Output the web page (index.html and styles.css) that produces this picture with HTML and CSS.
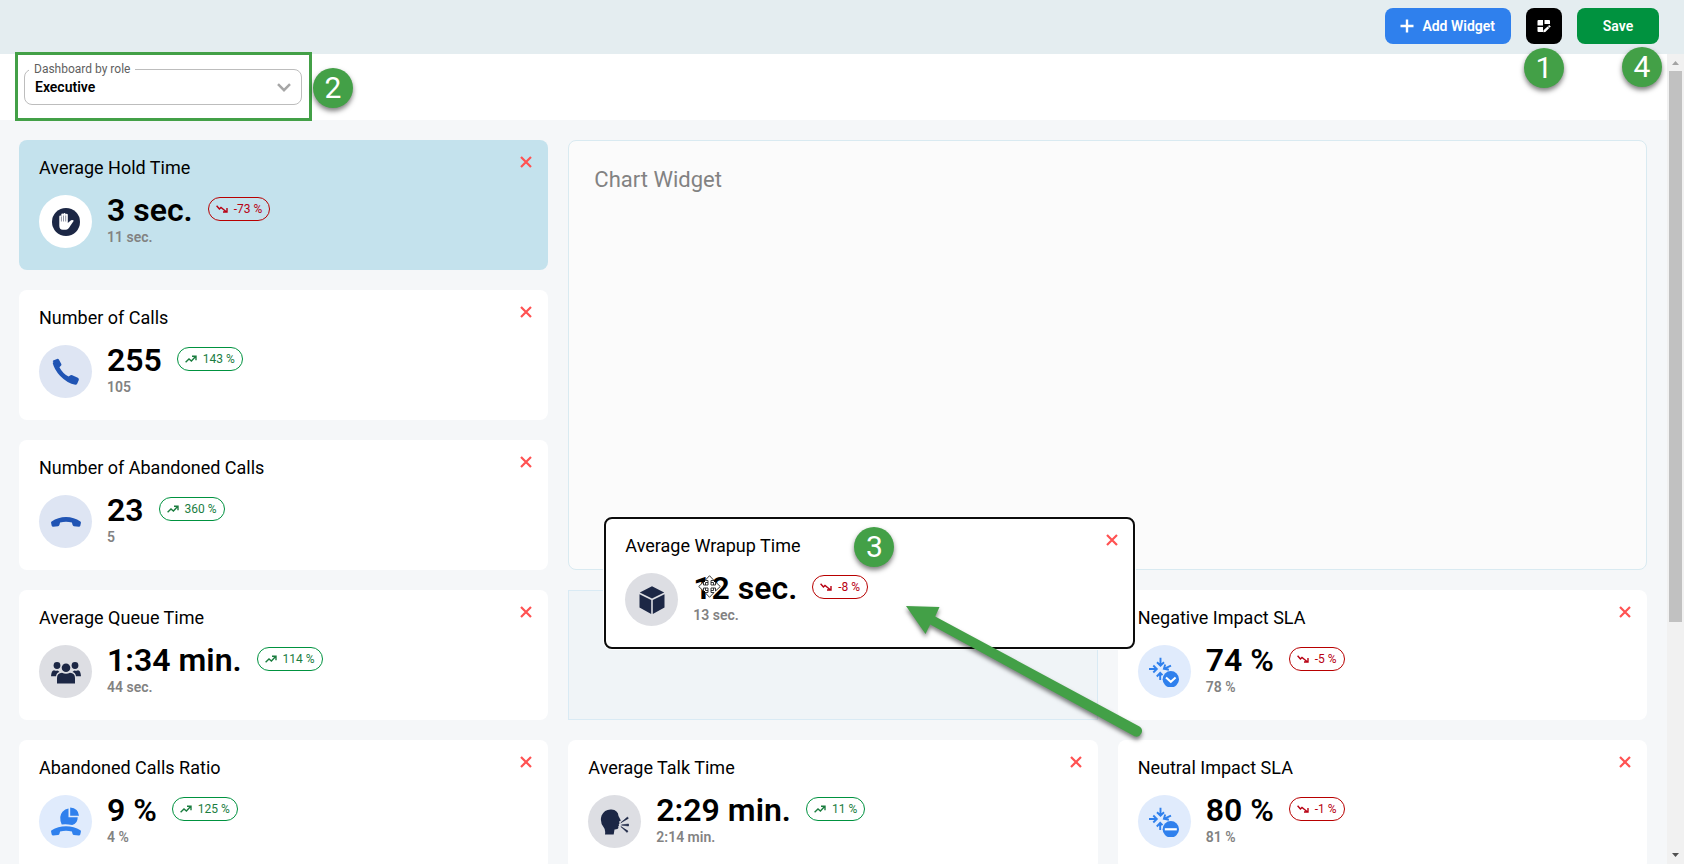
FILE: index.html
```html
<!DOCTYPE html>
<html lang="en">
<head>
  <meta charset="UTF-8">
  <meta name="viewport" content="width=device-width, initial-scale=1.0">
  <title>Dashboard</title>
  <link rel="stylesheet" href="styles.css">
</head>
<body>
  <!-- icon sprites -->
  <svg class="sprites" aria-hidden="true">
    <symbol id="i-close" viewBox="0 0 12 12"><path d="M1 1l10 10M11 1L1 11" fill="none" stroke="#ff5252" stroke-width="2.200"/></symbol>
    <symbol id="i-up" viewBox="0 0 12 8"><path d="M0.6 7.2L4 4l2.4 2L10.6 1.6M7 1.2h4v4" fill="none" stroke="currentColor" stroke-width="1.4"/></symbol>
    <symbol id="i-down" viewBox="0 0 12 8"><path d="M0.6 0.8L3.4 4l1.6-1.6L10.6 7M11 3v4H7" fill="none" stroke="currentColor" stroke-width="1.4"/></symbol>
    <symbol id="i-hand" viewBox="0 0 30 30">
      <circle cx="15" cy="15" r="14" fill="#1c2745"/>
      <path d="M8.3 9.5a1 1 0 0 1 2 0V7.600a1 1 0 0 1 2.100 0V7a1 1 0 0 1 2.200 0v.8a1 1 0 0 1 2.200 0V16l3.200-2.700q1.600-1 2.800.4l-3.600 5.400q-1.800 3.700-4.400 3.700h-3q-3.500 0-3.500-4z" fill="#fff"/>
      <path d="M10.400 9.500v5M12.500 8.500v6M14.700 8.500v6" stroke="#1c2745" stroke-width=".5"/>
    </symbol>
    <symbol id="i-phone" viewBox="0 0 30 30"><path d="M2.500 5Q1 4.300 2.200 3.400L6 1.900q1.200-.5 1.900.7l2.400 4.300q.5 1-.4 1.800L8.400 10.200q3.400 6.400 9.200 9.400l1.900-1.300q.8-.6 1.800-.1l5.500 2.500q1.500.8 1 2.200l-1.500 3.600q-.6 1.300-2 1.200Q16.500 26.500 9 18.700 3.300 12.600 1.700 6z" fill="#2054b4"/></symbol>
    <symbol id="i-hangup" viewBox="0 0 30 12"><path d="M.6 5.500Q7 1 15 1t14.400 4.500q.7.600.5 1.500l-.6 2.800q-.3 1-1.400 1l-5-.5q-1-.2-1.300-1.200l-.7-2.500Q15 4.700 9.100 6.600l-.7 2.500q-.3 1-1.300 1.200l-5 .5q-1.100 0-1.400-1L.1 7Q-.1 6.100.6 5.500z" fill="currentColor"/></symbol>
    <symbol id="i-group" viewBox="0 0 30 30">
      <g fill="#1c2745">
        <circle cx="6" cy="8.500" r="3.400"/><circle cx="24" cy="8.500" r="3.400"/>
        <circle cx="15" cy="10.800" r="4.300"/>
        <path d="M6 26.600v-5.600q0-5 5-5.300 4 2 8 0 5 .3 5 5.300v5.600z"/>
        <path d="M0 19.200q.4-5.800 3-6 2 1 3.800.4l1.700 1.500Q5.400 16 5 19.200zM30 19.200q-.4-5.800-3-6-2 1-3.800.4l-1.700 1.500q3.100.9 3.500 4.100z"/>
      </g>
    </symbol>
    <symbol id="i-ratio" viewBox="0 0 30 30">
      <g fill="#2f80ed">
        <path d="M17.500 1.500v8.800h9.200q0 6.500-5.500 7.700-7-1.400-10.500-.4Q7.300 9.500 11.500 4.800 14 2 17.500 1.500z"/>
        <path d="M19.200.500q8.300.8 8.800 8.300h-8.800z"/>
        <path d="M.6 23.300Q7 19.300 15 19.300t14.400 4q.7.600.5 1.500l-.6 2.800q-.3 1-1.400 1l-5-.5q-1-.2-1.300-1.200l-.7-2.300Q15 22.700 9.100 24.600l-.7 2.300q-.3 1-1.300 1.200l-5 .5q-1.100 0-1.400-1l-.6-2.800q-.2-.9.500-1.500z"/>
      </g>
    </symbol>
    <symbol id="i-cube" viewBox="0 0 30 30">
      <path d="M15 1.300l12.200 6.200L15 13.500 2.800 7.500zM2.500 9.200L14.200 15v14L2.500 22.500zM27.500 9.200L15.800 15v14l11.700-6.500z" fill="#1c2745"/>
    </symbol>
    <symbol id="i-talk" viewBox="0 0 30 30">
      <path d="M5 27.500q.8-5-1.500-7.500Q-.5 15 1.600 8.500 4.500 2 11.500 2.500q6.500.5 7 6.500l2.200 4.300q0 .8-1.500 1l.3 2.200-.8.900.3 1-.8 1 .2 1.600q-.3 1.500-3.900 1.400l-.8 5.100z" fill="#1c2745"/>
      <path d="M20.800 15.800L27.500 10l.8 1.400zM21.500 18l7-1v2zM20.800 19.500l7.200 4.600-.9 1.300z" fill="#1c2745" stroke="#1c2745" stroke-width=".6"/>
    </symbol>
    <symbol id="i-impact" viewBox="0 0 30 30">
      <g fill="none" stroke="#2f80ed" stroke-width="1.900">
        <path d="M11.500.800v7.400M8 5.200l3.500 3.400L15 5.200M0 12h7.200M4.300 8.500L7.800 12l-3.500 3.500M22 8.700l-6.500 3M16.200 7.500l-1.300 4.300 5 1M11.200 23v-6.500M7.800 19.500l3.400-3.700 2.300 2.400"/>
      </g>
      <circle cx="21.800" cy="22.300" r="8.200" fill="#2f80ed"/>
    </symbol>
  </svg>

  <header class="topbar">
    <button class="btn btn-add" type="button">
      <svg width="14" height="14" viewBox="0 0 14 14"><path d="M7 0.500v13M0.500 7h13" stroke="#fff" stroke-width="2.400"/></svg>
      Add Widget
    </button>
    <button class="btn btn-layout" type="button" aria-label="Edit layout">
      <svg width="14" height="14" viewBox="0 0 14 14">
        <path d="M1.500 1H6v5.500H.5V2q0-1 1-1zM7.500 1h4.500q1 0 1 1v3H7.500zM.5 8H6v5H1.500q-1 0-1-1zM12.200 6l1.600 1.400-5.500 5.600-2 .3.200-2z" fill="#fff"/>
        <path d="M10.500 7l2 2" stroke="#000" stroke-width=".7"/>
      </svg>
    </button>
    <button class="btn btn-save" type="button">Save</button>
    <span class="mark mark-1">1</span>
    <span class="mark mark-4">4</span>
  </header>

  <div class="viewport">
    <div class="page">
      <section class="filters">
        <div class="role-select">
          <label for="role">Dashboard by role</label>
          <select id="role"><option>Executive</option></select>
          <svg class="chevron" width="14" height="9" viewBox="0 0 14 9"><path d="M1 1.200l6 6 6-6" fill="none" stroke="#a6a6a6" stroke-width="2.500"/></svg>
        </div>
        <div class="highlight"></div>
        <span class="mark mark-2">2</span>
      </section>

      <main class="grid">
        <article class="card card-active">
          <h2>Average Hold Time</h2>
          <button class="close" type="button" aria-label="Remove"><svg><use href="#i-close"/></svg></button>
          <div class="metric">
            <div class="icon"><svg><use href="#i-hand"/></svg></div>
            <div class="figures">
              <div class="main-line"><strong>3 sec.</strong><span class="pill down"><svg><use href="#i-down"/></svg>-73 %</span></div>
              <div class="previous">11 sec.</div>
            </div>
          </div>
        </article>

        <section class="chart">
          <h2>Chart Widget</h2>
        </section>

        <article class="card">
          <h2>Number of Calls</h2>
          <button class="close" type="button" aria-label="Remove"><svg><use href="#i-close"/></svg></button>
          <div class="metric">
            <div class="icon icon-navy"><svg><use href="#i-phone"/></svg></div>
            <div class="figures">
              <div class="main-line"><strong>255</strong><span class="pill up"><svg><use href="#i-up"/></svg>143 %</span></div>
              <div class="previous">105</div>
            </div>
          </div>
        </article>

        <article class="card">
          <h2>Number of Abandoned Calls</h2>
          <button class="close" type="button" aria-label="Remove"><svg><use href="#i-close"/></svg></button>
          <div class="metric">
            <div class="icon icon-navy"><svg><use href="#i-hangup"/></svg></div>
            <div class="figures">
              <div class="main-line"><strong>23</strong><span class="pill up"><svg><use href="#i-up"/></svg>360 %</span></div>
              <div class="previous">5</div>
            </div>
          </div>
        </article>

        <article class="card">
          <h2>Average Queue Time</h2>
          <button class="close" type="button" aria-label="Remove"><svg><use href="#i-close"/></svg></button>
          <div class="metric">
            <div class="icon icon-grey"><svg><use href="#i-group"/></svg></div>
            <div class="figures">
              <div class="main-line"><strong>1:34 min.</strong><span class="pill up"><svg><use href="#i-up"/></svg>114 %</span></div>
              <div class="previous">44 sec.</div>
            </div>
          </div>
        </article>

        <!-- drop target with the widget being dragged over it -->
        <div class="slot">
          <article class="card dragging">
            <h2>Average Wrapup Time</h2>
            <button class="close" type="button" aria-label="Remove"><svg><use href="#i-close"/></svg></button>
            <div class="metric">
              <div class="icon icon-grey"><svg><use href="#i-cube"/></svg></div>
              <div class="figures">
                <div class="main-line"><strong>12 sec.</strong><span class="pill down"><svg><use href="#i-down"/></svg>-8 %</span></div>
                <div class="previous">13 sec.</div>
              </div>
            </div>
            <svg class="cursor" viewBox="0 0 23 23">
              <path d="M11.500.700L16 5.500V7h1.500l4.800 4.500-4.800 4.500H16v1.500l-4.500 4.800L7 17.500V16H5.500L.700 11.500 5.500 7H7V5.500z" fill="#fff"/>
              <path d="M7.500 5.500h-.5l4.500-4.800L16 5.500h-3V10h4.500V7l4.800 4.500-4.800 4.500v-3H13v4.500h3l-4.500 4.800L7 17.500h3V13H5.500v3L.700 11.500 5.500 7v3H10V5.500z" fill="none" stroke="#222" stroke-width=".9"/>
              <path d="M7.500 10V7.500H10M13 7.500h2.500V10M7.500 13v2.500H10M13 15.500h2.500V13" fill="none" stroke="#222" stroke-width=".9"/>
            </svg>
          </article>
          <span class="mark mark-3">3</span>
          <svg class="arrow" viewBox="0 0 250 140">
            <path d="M8 6L41.500 7 37.200 16.500 241.500 126.500A5.500 5.500 0 0 1 236.500 136.200L32.200 24.500 27.500 34z" fill="#43a047"/>
          </svg>
        </div>

        <article class="card">
          <h2>Negative Impact SLA</h2>
          <button class="close" type="button" aria-label="Remove"><svg><use href="#i-close"/></svg></button>
          <div class="metric">
            <div class="icon icon-blue"><svg viewBox="0 0 30 30"><use href="#i-impact"/><path d="M17 20.500l4.800 4.300 4.800-4.300" fill="none" stroke="#fff" stroke-width="2"/></svg></div>
            <div class="figures">
              <div class="main-line"><strong>74 %</strong><span class="pill down"><svg><use href="#i-down"/></svg>-5 %</span></div>
              <div class="previous">78 %</div>
            </div>
          </div>
        </article>

        <article class="card">
          <h2>Abandoned Calls Ratio</h2>
          <button class="close" type="button" aria-label="Remove"><svg><use href="#i-close"/></svg></button>
          <div class="metric">
            <div class="icon icon-blue"><svg><use href="#i-ratio"/></svg></div>
            <div class="figures">
              <div class="main-line"><strong>9 %</strong><span class="pill up"><svg><use href="#i-up"/></svg>125 %</span></div>
              <div class="previous">4 %</div>
            </div>
          </div>
        </article>

        <article class="card">
          <h2>Average Talk Time</h2>
          <button class="close" type="button" aria-label="Remove"><svg><use href="#i-close"/></svg></button>
          <div class="metric">
            <div class="icon icon-grey"><svg><use href="#i-talk"/></svg></div>
            <div class="figures">
              <div class="main-line"><strong>2:29 min.</strong><span class="pill up"><svg><use href="#i-up"/></svg>11 %</span></div>
              <div class="previous">2:14 min.</div>
            </div>
          </div>
        </article>

        <article class="card">
          <h2>Neutral Impact SLA</h2>
          <button class="close" type="button" aria-label="Remove"><svg><use href="#i-close"/></svg></button>
          <div class="metric">
            <div class="icon icon-blue"><svg viewBox="0 0 30 30"><use href="#i-impact"/><path d="M15.800 22.300h12" stroke="#fff" stroke-width="2.200"/></svg></div>
            <div class="figures">
              <div class="main-line"><strong>80 %</strong><span class="pill down"><svg><use href="#i-down"/></svg>-1 %</span></div>
              <div class="previous">81 %</div>
            </div>
          </div>
        </article>
      </main>
    </div>

    <div class="scrollbar">
      <svg viewBox="0 0 17 17"><path d="M5 11l3.500-4 3.500 4z" fill="#a3a3a3"/></svg>
      <div class="track"><div class="thumb"></div></div>
      <svg viewBox="0 0 17 17"><path d="M5 6l3.500 4L12 6z" fill="#505050"/></svg>
    </div>
  </div>
</body>
</html>
```
FILE: styles.css
```css
* {
  box-sizing: border-box;
}

body {
  margin: 0;
  height: 100vh;
  display: flex;
  flex-direction: column;
  overflow: hidden;
  font-family: Roboto, "Liberation Sans", sans-serif;
  background: #f5f7f9;
  color: #000;
}

.sprites {
  position: absolute;
  width: 0;
  height: 0;
}

/* top bar */
.topbar {
  position: relative;
  z-index: 3;
  display: flex;
  justify-content: flex-end;
  gap: 15px;
  padding: 8px 25px 10px;
  background: #e4edf0;
}

.btn {
  display: flex;
  align-items: center;
  justify-content: center;
  height: 36px;
  padding: 0;
  border: none;
  border-radius: 8px;
  font: 600 14px Roboto, sans-serif;
  color: #fff;
  cursor: pointer;
}

.btn-add {
  gap: 8px;
  padding: 0 16px 0 15px;
  background: #2f80ed;
}

.btn-layout {
  width: 36px;
  background: #000;
}

.btn-save {
  width: 82px;
  background: #00923f;
}

/* numbered markers */
.mark {
  position: absolute;
  z-index: 5;
  width: 40px;
  height: 40px;
  border-radius: 50%;
  background: #43a047;
  color: #fff;
  font-size: 30px;
  line-height: 40px;
  text-align: center;
  box-shadow: 0 3px 5px rgba(0, 0, 0, 0.5);
}

.mark-1 {
  top: 48px;
  right: 120px;
}

.mark-2 {
  top: 14px;
  left: 313px;
}

.mark-3 {
  top: -64px;
  left: 285px;
}

.mark-4 {
  top: 47px;
  right: 22px;
}

.viewport {
  flex: 1;
  min-height: 0;
  display: flex;
}

.page {
  flex: 1;
}

/* role filter */
.filters {
  position: relative;
  padding: 15px 24px;
  background: #fff;
}

.role-select {
  position: relative;
  width: 278px;
}

.role-select label {
  position: absolute;
  top: -8px;
  left: 5px;
  padding: 0 5px;
  background: #fff;
  font-size: 12px;
  line-height: 16px;
  color: #5f5f5f;
}

.role-select select {
  display: block;
  width: 100%;
  height: 36px;
  padding: 0 10px;
  border: 1px solid #bdbdbd;
  border-radius: 8px;
  appearance: none;
  background: #fff;
  font: 600 14px Roboto, sans-serif;
  color: #000;
}

.chevron {
  position: absolute;
  right: 11px;
  top: 14px;
}

.highlight {
  position: absolute;
  z-index: 4;
  top: -2px;
  left: 15px;
  width: 297px;
  height: 69px;
  border: 3px solid #43a047;
  pointer-events: none;
}

/* widgets */
.grid {
  display: grid;
  grid-template-columns: repeat(3, 1fr);
  grid-auto-rows: 130px;
  gap: 20px;
  padding: 20px 20px 20px 19px;
}

.card {
  position: relative;
  padding: 15px 20px;
  border-radius: 8px;
  background: #fff;
}

.card-active {
  background: #c4e2ed;
}

.card h2 {
  margin: 0;
  font-size: 18px;
  font-weight: 400;
  line-height: 25px;
}

.close {
  position: absolute;
  top: 16px;
  right: 16px;
  width: 12px;
  height: 12px;
  padding: 0;
  border: none;
  background: none;
  cursor: pointer;
}

.close svg {
  display: block;
  width: 12px;
  height: 12px;
}

.metric {
  display: flex;
  gap: 15px;
  margin-top: 15px;
}

.icon {
  display: flex;
  align-items: center;
  justify-content: center;
  width: 53px;
  height: 53px;
  border-radius: 50%;
  background: #fff;
}

.icon svg {
  width: 30px;
  height: 30px;
}

.icon-navy {
  background: #dee5f3;
  color: #2054b4;
}

.icon-grey {
  background: #dddee3;
}

.icon-blue {
  background: #e0ebfc;
}

.main-line {
  display: flex;
  align-items: center;
  gap: 15px;
  height: 30px;
}

.main-line strong {
  font-size: 32px;
  font-weight: 600;
  line-height: 30px;
}

.pill {
  display: flex;
  align-items: center;
  gap: 6px;
  height: 24px;
  margin-bottom: 2px;
  padding: 0 7px;
  border: 1px solid;
  border-radius: 12px;
  font-size: 12px;
}

.pill svg {
  width: 12px;
  height: 8px;
}

.up {
  border-color: #00923f;
  color: #1b7d3f;
}

.down {
  border-color: #b80000;
  color: #b80012;
}

.previous {
  margin-top: 4px;
  font-size: 14px;
  font-weight: 600;
  line-height: 16px;
  color: #828282;
}

.chart {
  grid-column: 2 / span 2;
  grid-row: 1 / span 3;
  padding: 24px 25px;
  border: 1px solid #d9eaf1;
  border-radius: 8px;
  background: #fbfbfb;
}

.chart h2 {
  margin: 0;
  font-size: 22px;
  font-weight: 400;
  line-height: 30px;
  color: #828282;
}

/* dragging */
.slot {
  position: relative;
  z-index: 2;
  border: 1px solid #d9eaf4;
  background: #f0f4f7;
}

.dragging {
  position: absolute;
  top: -74px;
  left: 35px;
  width: calc(100% + 3px);
  height: 132px;
  padding: 14px 19px;
  border: 2px solid #0c0c0c;
  box-shadow: 0 0 0 1px #fff;
}

.dragging .close {
  top: 15px;
  right: 15px;
}

.cursor {
  position: absolute;
  top: 56px;
  left: 92px;
  width: 23px;
  height: 23px;
}

.arrow {
  position: absolute;
  z-index: 4;
  top: 9px;
  left: 329px;
  width: 250px;
  height: 140px;
  overflow: visible;
  filter: drop-shadow(0 3px 2px rgba(0, 0, 0, 0.5));
}

/* scrollbar */
.scrollbar {
  display: flex;
  flex-direction: column;
  width: 17px;
  background: #f1f1f1;
}

.scrollbar svg {
  width: 17px;
  height: 17px;
}

.track {
  flex: 1;
  padding: 0 2px;
}

.thumb {
  height: 71%;
  background: #c1c1c1;
}
```
